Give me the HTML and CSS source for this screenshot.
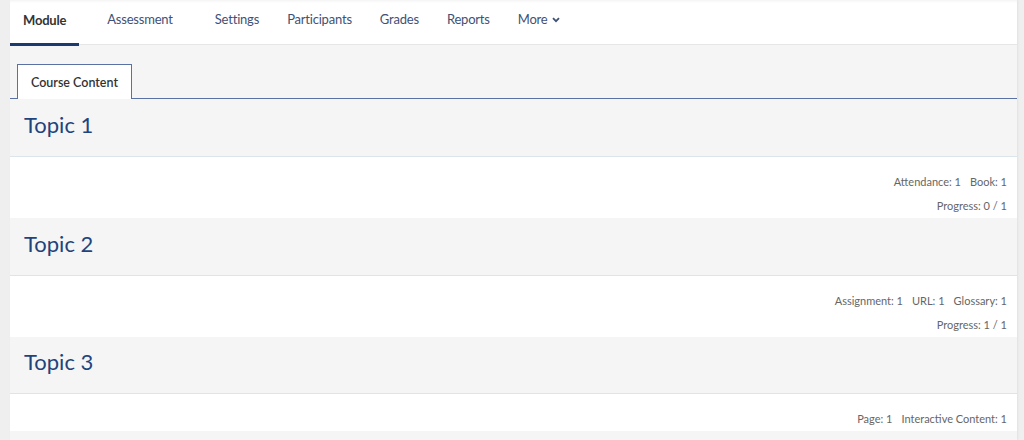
FILE: index.html
```html
<!DOCTYPE html>
<html lang="en">
<head>
<meta charset="utf-8">
<title>Course</title>
<link rel="stylesheet" href="styles.css">
</head>
<body>
<div class="page">
  <nav class="nav">
    <a class="nav-item active">Module</a>
    <a class="nav-item wide">Assessment</a>
    <a class="nav-item">Settings</a>
    <a class="nav-item">Participants</a>
    <a class="nav-item">Grades</a>
    <a class="nav-item">Reports</a>
    <a class="nav-item">More <svg class="chev" width="8" height="6" viewBox="0 0 8 6"><path d="M1 1.2 L4 4.2 L7 1.2" fill="none" stroke="currentColor" stroke-width="1.8"/></svg></a>
  </nav>
  <div class="content">
    <div class="tabs">
      <div class="tab">Course Content</div>
    </div>
    <section class="topic">
      <h2 class="topic-title">Topic 1</h2>
      <div class="topic-body">
        <div class="line">Attendance: 1<span class="sp"></span>Book: 1</div>
        <div class="line">Progress: 0 / 1</div>
      </div>
    </section>
    <section class="topic">
      <h2 class="topic-title">Topic 2</h2>
      <div class="topic-body">
        <div class="line">Assignment: 1<span class="sp"></span>URL: 1<span class="sp"></span>Glossary: 1</div>
        <div class="line">Progress: 1 / 1</div>
      </div>
    </section>
    <section class="topic">
      <h2 class="topic-title t3">Topic 3</h2>
      <div class="topic-body">
        <div class="line">Page: 1<span class="sp"></span>Interactive Content: 1</div>
      </div>
    </section>
  </div>
</div>
</body>
</html>
```
FILE: styles.css
```css
html, body {
  margin: 0;
  padding: 0;
  background: #efefef;
  font-family: "Lato", "Liberation Sans", sans-serif;
  overflow: hidden;
}
.page {
  margin: 0 7px 0 10px;
  background: #f5f5f5;
  min-height: 440px;
  box-shadow: 1px 0 2px rgba(0,0,0,0.06);
}
.nav {
  display: flex;
  height: 44px;
  background: #fff;
  border-bottom: 1px solid #e6e6e6;
  box-shadow: inset 0 3px 3px -2px rgba(0,0,0,0.06);
}
.nav-item {
  display: flex;
  align-items: center;
  gap: 4px;
  padding: 0 14px;
  font-size: 13px;
  letter-spacing: -0.2px;
  color: #3f5175;
  height: 44px;
  box-sizing: border-box;
  padding-bottom: 6px;
}
.nav-item.wide { padding: 0 28px 6px; }
.nav-item.active {
  font-weight: 700;
  color: #333;
  padding-left: 13px;
  padding-right: 13px;
  border-bottom: 3px solid #1b3a6f;
  padding-bottom: 3px;
  height: 46px;
}
.chev { margin-top: 1px; }
.tabs {
  padding: 19px 0 0 7px;
  border-bottom: 1px solid #5a72a3;
  display: flex;
}
.tab {
  width: 115px;
  box-sizing: border-box;
  height: 35px;
  margin-bottom: -1px;
  background: #fff;
  border: 1px solid #5a72a3;
  border-bottom: none;
  display: flex;
  align-items: center;
  justify-content: center;
  font-size: 12.5px;
  font-weight: 600;
  color: #333;
  padding-top: 1px;
}
.topic-title {
  margin: 0;
  padding: 9px 14px 15px;
  line-height: 33px;
  font-size: 22px;
  font-weight: 400;
  color: #1f447c;
  background: #f5f5f5;
  border-bottom: 1px solid #dce4ec;
}
.topic-title.t3 { padding-top: 8px; padding-bottom: 15px; }
.topic-body {
  background: #fff;
  padding: 13px 10px 0 10px;
}
.line {
  text-align: right;
  font-size: 11px;
  line-height: 24px;
  color: #666;
}
.sp { display: inline-block; width: 9px; }
```
